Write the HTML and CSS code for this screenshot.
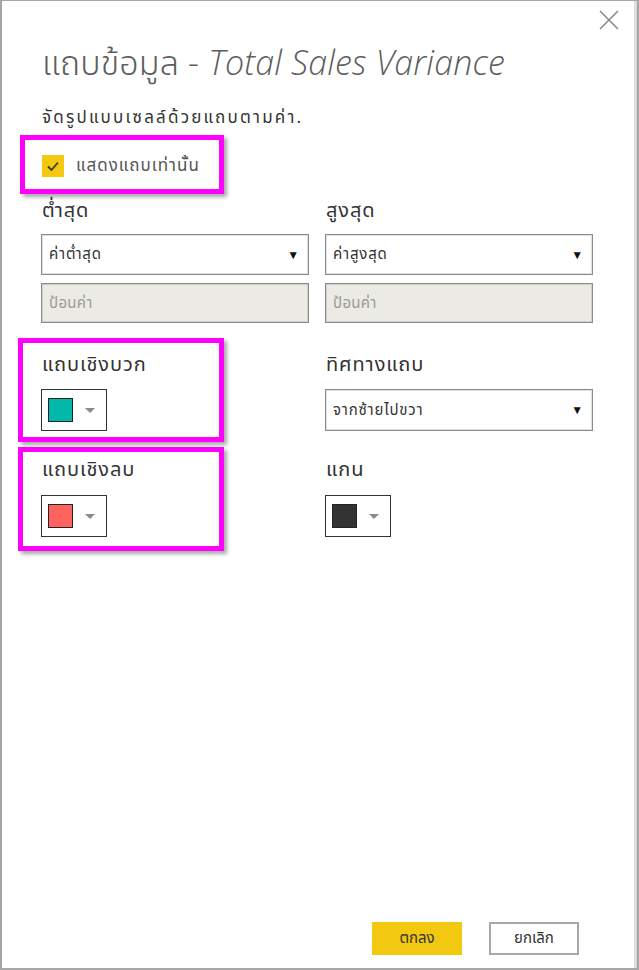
FILE: index.html
```html
<!DOCTYPE html>
<html lang="th">
<head>
<meta charset="utf-8">
<link rel="stylesheet" href="styles.css">
</head>
<body>
<div class="dialog">
  <button class="close" aria-label="close">
    <svg width="22" height="22" viewBox="0 0 22 22"><path d="M2 2 L20 20 M20 2 L2 20" stroke="#8a8a8a" stroke-width="1.6" fill="none"/></svg>
  </button>
  <h1 class="title">แถบข้อมูล - <em>Total Sales Variance</em></h1>
  <p class="subtitle">จัดรูปแบบเซลล์ด้วยแถบตามค่า.</p>
  <label class="check-row">
    <span class="checkbox">
      <svg width="14" height="12" viewBox="0 0 14 12"><path d="M2 6.5 L5.5 10 L12 2.5" stroke="#3a3a2a" stroke-width="1.8" fill="none"/></svg>
    </span>
    <span class="check-label">แสดงแถบเท่านั้น</span>
  </label>

  <div class="grid">
    <div class="field">
      <div class="label">ต่ำสุด</div>
      <div class="select"><span>ค่าต่ำสุด</span><span class="arrow">▼</span></div>
      <div class="input">ป้อนค่า</div>
    </div>
    <div class="field">
      <div class="label">สูงสุด</div>
      <div class="select"><span>ค่าสูงสุด</span><span class="arrow">▼</span></div>
      <div class="input">ป้อนค่า</div>
    </div>

    <div class="field row2">
      <div class="label">แถบเชิงบวก</div>
      <div class="picker"><span class="swatch teal"></span><span class="caret"></span></div>
    </div>
    <div class="field row2">
      <div class="label">ทิศทางแถบ</div>
      <div class="select"><span>จากซ้ายไปขวา</span><span class="arrow">▼</span></div>
    </div>

    <div class="field row3">
      <div class="label">แถบเชิงลบ</div>
      <div class="picker"><span class="swatch red"></span><span class="caret"></span></div>
    </div>
    <div class="field row3">
      <div class="label">แกน</div>
      <div class="picker"><span class="swatch dark"></span><span class="caret"></span></div>
    </div>
  </div>

  <div class="footer">
    <button class="btn primary">ตกลง</button>
    <button class="btn secondary">ยกเลิก</button>
  </div>

  <div class="mark mark1"></div>
  <div class="mark mark2"></div>
  <div class="mark mark3"></div>
</div>
</body>
</html>
```
FILE: styles.css
```css
html, body {
  margin: 0;
  padding: 0;
  background: #ffffff;
}
body {
  width: 639px;
  height: 970px;
  overflow: hidden;
  font-family: "Noto Sans Thai", "Noto Sans", "Liberation Sans", sans-serif;
}
.dialog {
  position: relative;
  box-sizing: border-box;
  width: 639px;
  height: 970px;
  border-top: 1px solid #a6a6a6;
  border-left: 2px solid #a6a6a6;
  border-bottom: 2px solid #a6a6a6;
  border-right: 2px solid #a6a6a6;
  box-shadow: inset -3px 0 0 #dcdcdc;
  padding: 0 0 0 40px;
  display: flex;
  flex-direction: column;
}
.close {
  position: absolute;
  top: 8px;
  right: 17px;
  border: 0;
  background: none;
  padding: 0;
  width: 22px;
  height: 22px;
}
.title {
  margin: 38px 0 0 0;
  font-size: 34px;
  font-weight: 300;
  letter-spacing: 0.15px;
  color: #5e5e5e;
  line-height: 46px;
  font-family: "Open Sans", "Noto Sans Thai", sans-serif;
}
.title em {
  font-style: italic;
}
.subtitle {
  margin: 23px 0 0 0;
  font-size: 17px;
  letter-spacing: 2.2px;
  color: #333;
  line-height: 20px;
}
.check-row {
  display: flex;
  align-items: center;
  gap: 12px;
  margin-top: 27px;
  height: 22px;
}
.checkbox {
  width: 22px;
  height: 22px;
  background: #f2c811;
  display: flex;
  align-items: center;
  justify-content: center;
}
.check-label {
  font-size: 17px;
  letter-spacing: 1px;
  color: #555;
}
.grid {
  display: grid;
  grid-template-columns: 268px 268px;
  column-gap: 16px;
  margin: 21px 0 0 -1px;
}
.field {
  display: flex;
  flex-direction: column;
}
.label {
  font-size: 20px;
  letter-spacing: 0.9px;
  color: #333;
  line-height: 26px;
  height: 26px;
  margin-bottom: 10px;
  padding-left: 1px;
}
.row2 { margin-top: 29px; }
.row2 .label { margin-bottom: 11px; }
.row3 { margin-top: 26px; }
.row3 .label { margin-bottom: 12px; }
.select {
  box-sizing: border-box;
  height: 41px;
  border: 1px solid #8a8a8a;
  box-shadow: inset 0 0 0 1px #e0e0e0;
  display: flex;
  align-items: center;
  justify-content: space-between;
  padding: 0 8px 0 7px;
  font-size: 15px;
  letter-spacing: 0.8px;
  color: #333;
}
.row2 .select { height: 42px; }
.arrow {
  font-size: 12px;
  color: #111;
}
.input {
  box-sizing: border-box;
  height: 40px;
  margin-top: 8px;
  border: 1px solid #8a8a8a;
  box-shadow: inset 0 0 0 1px #d0d0c8;
  background: #ebeae4;
  display: flex;
  align-items: center;
  padding: 0 7px;
  font-size: 15px;
  letter-spacing: 0.3px;
  color: #9a9a9a;
}
.picker {
  box-sizing: border-box;
  width: 66px;
  height: 42px;
  border: 1px solid #333;
  display: flex;
  align-items: center;
  padding-left: 6px;
  gap: 12px;
}
.swatch {
  box-sizing: border-box;
  width: 25px;
  height: 24px;
  border: 1px solid #222;
}
.teal { background: #01b8aa; }
.red { background: #fd625e; }
.dark { background: #333333; }
.caret {
  width: 0;
  height: 0;
  border-left: 5px solid transparent;
  border-right: 5px solid transparent;
  border-top: 5px solid #8a8a8a;
}
.footer {
  margin-top: auto;
  margin-bottom: 13px;
  display: flex;
  gap: 27px;
  padding-left: 330px;
}
.btn {
  width: 90px;
  height: 33px;
  font-family: "Noto Sans Thai", "Noto Sans", sans-serif;
  font-size: 15px;
  color: #333;
  padding: 0;
}
.primary {
  background: #f2c811;
  border: 1px solid #f2c811;
}
.secondary {
  background: #fff;
  border: 2px solid #a8a8a8;
}
.mark {
  position: absolute;
  box-sizing: border-box;
  border: 5px solid #ff00ff;
  box-shadow: 3px 3px 4px rgba(0,0,0,0.35);
}
.mark1 { left: 18px; top: 134px; width: 204px; height: 59px; }
.mark2 { left: 16px; top: 337px; width: 206px; height: 104px; }
.mark3 { left: 16px; top: 446px; width: 206px; height: 104px; }
```
